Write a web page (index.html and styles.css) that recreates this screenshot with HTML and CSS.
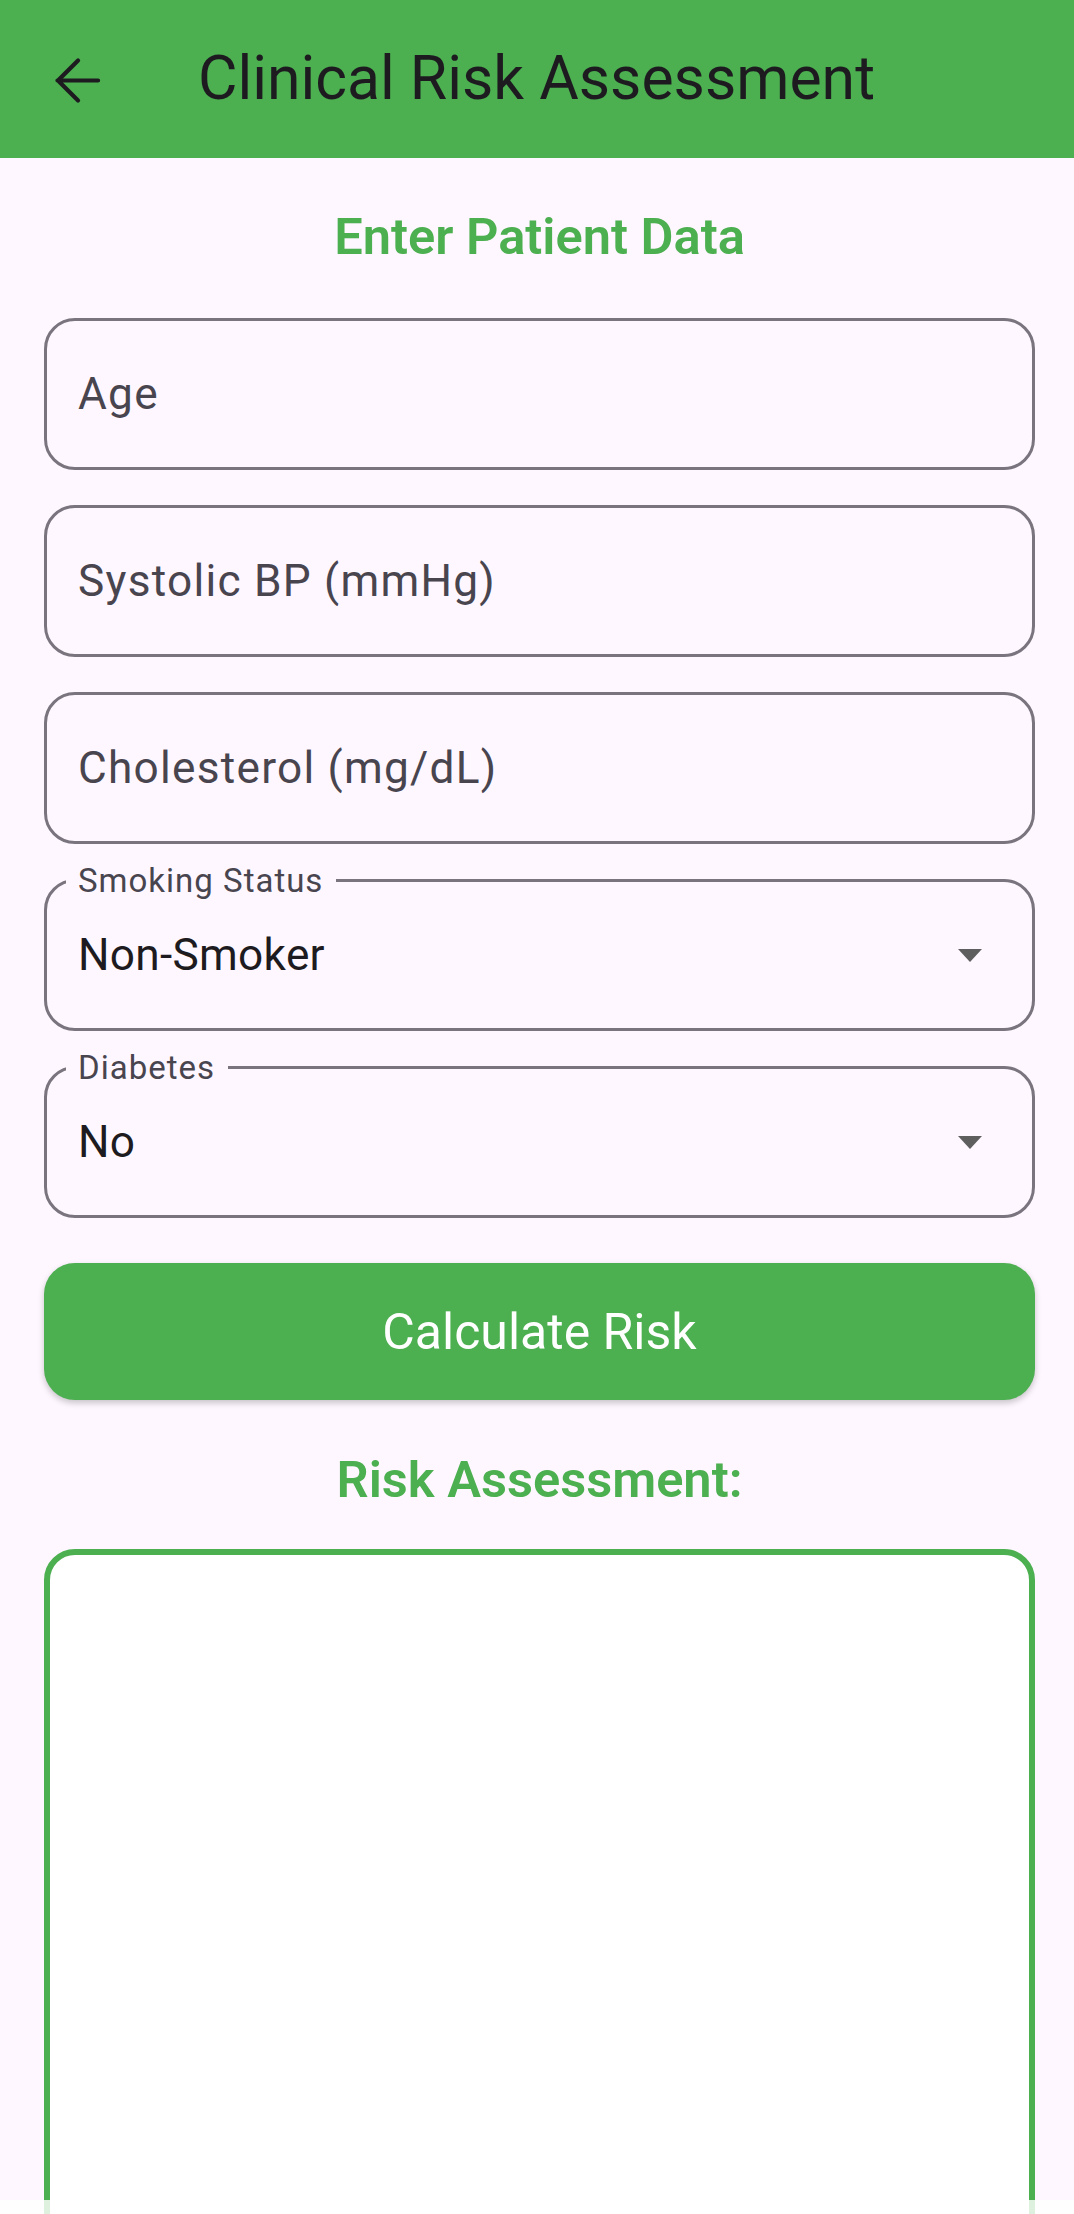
FILE: index.html
```html
<!DOCTYPE html>
<html lang="en">
<head>
  <meta charset="UTF-8" />
  <meta name="viewport" content="width=device-width, initial-scale=1.0" />
  <title>Clinical Risk Assessment</title>
  <link rel="stylesheet" href="styles.css">
</head>
<body>
  <div class="app">
    <header class="app-bar">
      <button class="back-button" aria-label="Back">
        <svg viewBox="0 0 24 24" width="65" height="65">
          <path d="M19.6 12H4.6M12.2 4.6L4.8 12l7.4 7.4" fill="none" stroke="#1d1b20" stroke-width="1.55" stroke-linecap="round" stroke-linejoin="round"/>
        </svg>
      </button>
      <h1 class="app-title">Clinical Risk Assessment</h1>
    </header>

    <main class="content">
      <h2 class="section-title">Enter Patient Data</h2>

      <div class="form">
        <input class="field" type="number" placeholder="Age" />
        <input class="field" type="number" placeholder="Systolic BP (mmHg)" />
        <input class="field" type="number" placeholder="Cholesterol (mg/dL)" />

        <div class="select-field">
          <span class="floating-label">Smoking Status</span>
          <select class="field-select">
            <option>Non-Smoker</option>
            <option>Smoker</option>
          </select>
          <span class="caret"></span>
        </div>

        <div class="select-field">
          <span class="floating-label">Diabetes</span>
          <select class="field-select">
            <option>No</option>
            <option>Yes</option>
          </select>
          <span class="caret"></span>
        </div>
      </div>

      <button class="action-button">Calculate Risk</button>

      <h2 class="section-title result-title">Risk Assessment:</h2>

      <div class="result-box"></div>
    </main>

    <div class="nav-fade"></div>
  </div>
</body>
</html>
```

FILE: styles.css
```css
html, body {
  margin: 0;
  padding: 0;
}
body {
  font-family: Roboto, "Noto Sans", sans-serif;
  background-color: #fef7ff;
  color: #1d1b20;
}
.app {
  height: 100vh;
  overflow: hidden;
  position: relative;
}
.app-bar {
  height: 158px;
  background-color: #4caf50;
  display: flex;
  align-items: center;
  padding-left: 45px;
}
.back-button {
  width: 65px;
  height: 65px;
  padding: 0;
  margin-top: 3px;
  border: none;
  background: none;
  display: flex;
}
.app-title {
  margin: 0 0 0 88px;
  font-size: 60.7px;
  line-height: 72px;
  font-weight: 400;
  color: #1d1b20;
}
.content {
  padding: 49px 39px 0 44px;
}
.section-title {
  margin: 0 0 51px 0;
  text-align: center;
  font-size: 50.6px;
  line-height: 60px;
  font-weight: 600;
  color: #4caf50;
}
.form {
  display: flex;
  flex-direction: column;
  gap: 35px;
}
.field, .select-field {
  height: 152px;
  box-sizing: border-box;
  border: 3px solid #79747e;
  border-radius: 31px;
  background: transparent;
}
.field {
  width: 100%;
  padding: 0 31px;
  font-family: Roboto, sans-serif;
  font-size: 44.2px;
  letter-spacing: 1.25px;
  color: #1d1b20;
  outline: none;
}
.field::placeholder {
  color: #49454f;
}
.select-field {
  position: relative;
}
.floating-label {
  position: absolute;
  top: -18px;
  left: 19px;
  padding: 0 13px 0 12px;
  background-color: #fef7ff;
  font-size: 33px;
  line-height: 34px;
  letter-spacing: 1px;
  color: #49454f;
}
.field-select {
  appearance: none;
  width: 100%;
  height: 100%;
  padding: 0 31px;
  border: none;
  background: transparent;
  font-family: Roboto, sans-serif;
  font-size: 44.2px;
  letter-spacing: 0.3px;
  color: #1d1b20;
  outline: none;
}
.caret {
  position: absolute;
  right: 50px;
  top: calc(50% - 6px);
  width: 0;
  height: 0;
  border-left: 12.5px solid transparent;
  border-right: 12.5px solid transparent;
  border-top: 13px solid #5e5e5e;
  pointer-events: none;
}
.action-button {
  display: block;
  width: 100%;
  height: 137px;
  margin-top: 45px;
  border: none;
  border-radius: 31px;
  background-color: #4caf50;
  color: #ffffff;
  font-family: Roboto, sans-serif;
  font-size: 50px;
  font-weight: 400;
  box-shadow: 0 3px 6px rgba(0, 0, 0, 0.22);
}
.result-title {
  margin: 50px 0 39px 0;
}
.result-box {
  height: 720px;
  box-sizing: border-box;
  border: 6px solid #4caf50;
  border-radius: 31px;
  background-color: #ffffff;
}
.nav-fade {
  position: absolute;
  left: 0;
  right: 0;
  bottom: 0;
  height: 14px;
  background-color: rgba(255, 255, 255, 0.82);
}
```
